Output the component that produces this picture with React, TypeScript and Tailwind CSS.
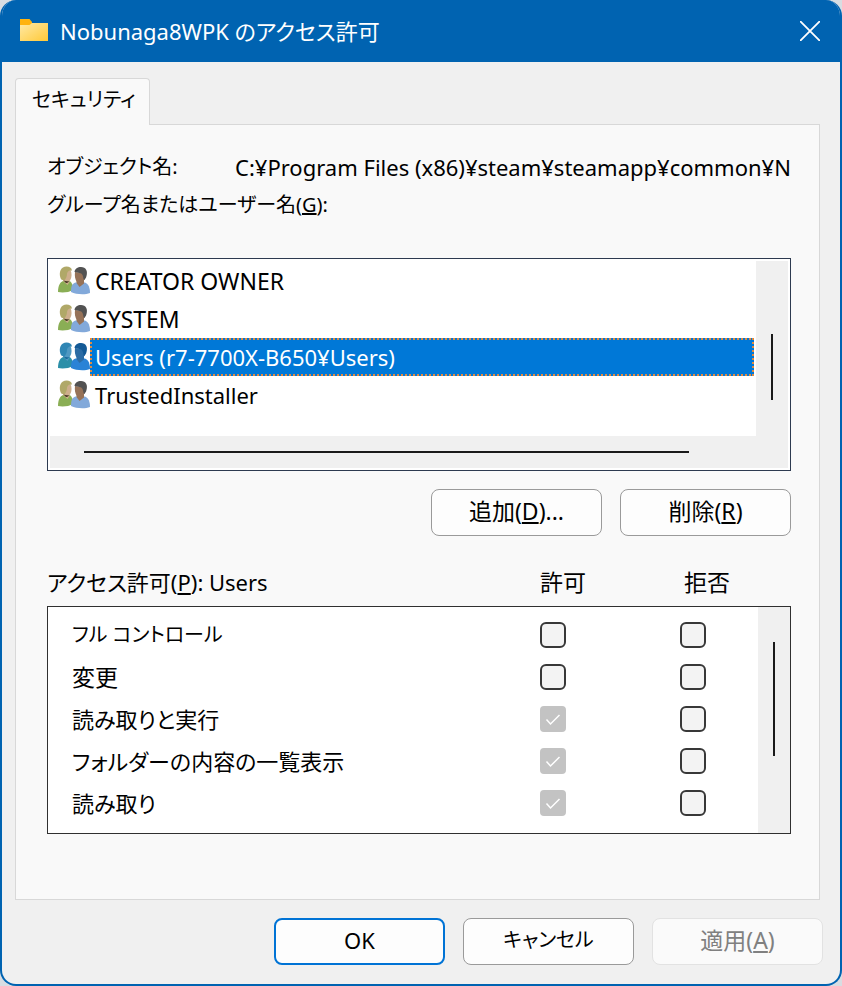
import React, { useState } from 'react';

const groups = [
    { id: 'creator', name: 'CREATOR OWNER', size: 'text-[23px]' },
    { id: 'system', name: 'SYSTEM', size: 'text-[23px]' },
    { id: 'users', name: 'Users (r7-7700X-B650¥Users)', size: 'text-[22px]' },
    { id: 'installer', name: 'TrustedInstaller', size: 'text-[22px]' },
];

const permissions = [
    { label: 'フル コントロール', inherited: false, size: 'text-xl' },
    { label: '変更', inherited: false, size: 'text-[23px]' },
    { label: '読み取りと実行', inherited: true, size: 'text-[22px]' },
    { label: 'フォルダーの内容の一覧表示', inherited: true, size: 'text-[22px]' },
    { label: '読み取り', inherited: true, size: 'text-[22px]' },
];

const FolderIcon = () => (
    <svg className="w-7 h-6 flex-shrink-0" viewBox="0 0 28 24" aria-hidden="true">
        <defs>
            <linearGradient id="folder" x1="0" y1="0" x2="1" y2="1">
                <stop offset="0" stopColor="#ffe9a6" />
                <stop offset="1" stopColor="#ffc937" />
            </linearGradient>
        </defs>
        <path d="M0 0h9.500l2.500 3v4H0z" fill="#ffb30f" />
        <path d="M0 6h9.500l2.500-2h16v18H0z" fill="url(#folder)" />
    </svg>
);

const GroupIcon = ({ selected }: { selected: boolean }) => {
    const c = selected
        ? { hairA: '#2f86b4', faceA: '#4f98c2', bodyA: '#2b8fa8', shade: '#1a6a9c', hairB: '#145a96', faceB: '#2c6ca4', bodyB: '#2a83d6' }
        : { hairA: '#b0a868', faceA: '#cdae8c', bodyA: '#8aae55', shade: '#4a3c28', hairB: '#525252', faceB: '#967258', bodyB: '#82a9da' };

    return (
        <svg className="w-8 h-8 flex-shrink-0" viewBox="0 0 32 32" aria-hidden="true">
            {/* woman */}
            <path d="M0 27c0-5.500 1.500-9.500 5-11h6.500c2.500 1.500 3.500 4 3.500 9-4 2.500-11 3-15 2z" fill={c.bodyA} />
            <path d="M5 13h6.500v4l-2 3L5 16z" fill={c.faceA} />
            <path d="M6 6l6.500-1c1.500 3 1.500 7.500-.5 10.500-2 1.500-4.500 1-6-1z" fill={c.faceA} />
            <path d="M2.500 13C.5 7 3 1.500 8.500 1.500c3 0 5 1 5.500 4-2.500 0-4.500.5-5 3 0 3-1 5.500-3 7-2-.5-3-1-3.500-2.500z" fill={c.hairA} />
            <path d="M5.500 15.500c2 .5 3.500 1 5.500.5-.5 1.500-1.500 2-3 2z" fill={c.shade} />
            {/* man */}
            <path d="M13 27c0-5.500 1-8.500 4.500-9.500H27c3.500 1.500 5 5 5 10.500-5 2-14 1.500-19-1z" fill={c.bodyB} />
            <path d="M18.500 14l7.500 0v4.500L21.500 22l-3-4z" fill={c.faceB} />
            <path d="M17 7l8 1 1.500 6.500c-2 3-5 4.500-7.500 2.500-2-2.500-2.500-6-2-10z" fill={c.faceB} />
            <path d="M16.500 7C17 3.500 19.500 2 23 2c5 0 7 4 5.500 9-.5 2-1.500 3.500-2.500 4-1-1.500-.5-3-1.500-5-1-2.500-4.500-2-8-3z" fill={c.hairB} />
        </svg>
    );
};

interface CheckProps {
    label: string;
    inherited?: boolean;
}

const Check: React.FC<CheckProps> = ({ label, inherited = false }) => (
    <label className="grid w-[26px] h-[26px]">
        <input
            type="checkbox"
            aria-label={label}
            defaultChecked={inherited}
            disabled={inherited}
            className="col-start-1 row-start-1 appearance-none w-full h-full rounded-md border-2 border-[#383838] bg-[#f3f3f3] disabled:rounded-sm disabled:border-[#c3c3c3] disabled:bg-[#c3c3c3]"
        />
        {inherited && (
            <svg className="col-start-1 row-start-1 w-full h-full" viewBox="0 0 26 26" fill="none" stroke="#fff" strokeWidth="1.500" aria-hidden="true">
                <path d="M6.500 13.500l4 4.500 9-9" />
            </svg>
        )}
    </label>
);

interface DialogButtonProps {
    children: React.ReactNode;
    variant?: 'primary' | 'normal';
    size?: string;
    disabled?: boolean;
}

const DialogButton: React.FC<DialogButtonProps> = ({ children, variant = 'normal', size = 'text-[23px]', disabled }) => (
    <button
        type="button"
        disabled={disabled}
        className={`w-[171px] h-[47px] pb-1 rounded-lg bg-[#fdfdfd] disabled:bg-[#fafafa] disabled:text-[#808080] disabled:border-[#e2e2e2] ${size}
            ${variant === 'primary' ? 'border-2 border-[#0073d5]' : 'border border-[#9a9a9a]'}`}
    >
        {children}
    </button>
);

export default function App() {
    const [selected, setSelected] = useState('users');

    return (
        <div className="min-h-screen flex bg-[#d8dde2] font-['Noto_Sans','Noto_Sans_CJK_JP',sans-serif] text-[22px] leading-[38px] text-black [font-feature-settings:'palt']">
            <main className="flex-1 min-w-0 flex flex-col rounded-2xl overflow-hidden bg-[#f0f0f0] border-2 border-t-0 border-[#0063b1]">
                {/* Title bar */}
                <header className="h-[62px] flex items-center gap-3 pl-[18px] pr-5 bg-[#0063b1] text-white">
                    <FolderIcon />
                    <h1 className="flex-1 truncate">Nobunaga8WPK のアクセス許可</h1>
                    <button type="button" aria-label="閉じる">
                        <svg className="w-5 h-5" viewBox="0 0 20 20" stroke="#fff" strokeWidth="1.800" aria-hidden="true">
                            <path d="M0 0l20 20M20 0L0 20" />
                        </svg>
                    </button>
                </header>

                <div className="flex-1 flex flex-col pt-4 pb-[18px] pl-[13px] pr-[17px]">
                    {/* Tab strip */}
                    <div role="tablist" className="flex h-[46px]">
                        <button
                            type="button"
                            role="tab"
                            aria-selected="true"
                            className="z-10 w-[135px] -mb-px pb-1 px-4 text-left text-xl leading-[38px] whitespace-nowrap border border-b-0 border-[#d8d8d8] bg-[#f9f9f9] rounded-t-sm"
                        >
                            セキュリティ
                        </button>
                    </div>

                    {/* Security page */}
                    <section className="mr-[3px] pl-[31px] pr-7 pt-[23px] pb-[65px] border border-[#d8d8d8] bg-[#f9f9f9]">
                        <div className="flex">
                            <span className="w-[188px] flex-shrink-0 text-xl leading-[38px]">オブジェクト名:</span>
                            <span className="flex-1 overflow-hidden whitespace-nowrap">C:¥Program Files (x86)¥steam¥steamapp¥common¥Nobunaga8WPK</span>
                        </div>
                        <h2 className="text-xl leading-[38px]">グループ名またはユーザー名(<u>G</u>):</h2>

                        <div className="mt-[34px] h-[213px] p-0.5 flex flex-col border border-[#2d3a50] bg-white">
                            <div className="flex-1 min-h-0 flex">
                                <ul className="flex-1 min-w-0 pt-px pl-2 pr-0.5">
                                    {groups.map((group) => {
                                        const isSelected = group.id === selected;

                                        return (
                                            <li key={group.id}>
                                                <button
                                                    type="button"
                                                    aria-pressed={isSelected}
                                                    onClick={() => setSelected(group.id)}
                                                    className="w-full h-[38px] flex items-center text-left"
                                                >
                                                    <GroupIcon selected={isSelected} />
                                                    <span
                                                        className={`flex-1 h-[38px] leading-[34px] px-[3px] border-2 border-dotted truncate ${group.size}
                                                            ${isSelected ? 'bg-[#0078d7] border-[#e08a40] text-white' : 'border-transparent'}`}
                                                    >
                                                        {group.name}
                                                    </span>
                                                </button>
                                            </li>
                                        );
                                    })}
                                </ul>
                                <div className="w-8 flex justify-center bg-[#f0f0f0] pt-[73px]">
                                    <div className="w-0.5 h-[66px] bg-[#1a1a1a]" />
                                </div>
                            </div>
                            <div className="h-8 flex items-center bg-[#f0f0f0] pl-[34px] pr-[99px]">
                                <div className="flex-1 h-0.5 bg-[#1a1a1a]" />
                            </div>
                        </div>

                        <div className="mt-[18px] flex justify-end gap-[18px]">
                            <DialogButton>追加(<u>D</u>)...</DialogButton>
                            <DialogButton>削除(<u>R</u>)</DialogButton>
                        </div>

                        <div className="mt-[27px] pb-[5px] flex">
                            <h2 className="flex-1">アクセス許可(<u>P</u>): Users</h2>
                            <span className="w-36 text-[23px] leading-[38px]">許可</span>
                            <span className="w-[107px] text-[23px] leading-[38px]">拒否</span>
                        </div>
                        <div className="flex border border-[#303030] bg-white">
                            <table className="flex-1 mt-[7px] mb-[9px]">
                                <tbody className="block">
                                    {permissions.map((permission) => (
                                        <tr key={permission.label} className="flex items-center h-[42px]">
                                            <th scope="row" className={`flex-1 pl-6 text-left font-normal ${permission.size}`}>
                                                {permission.label}
                                            </th>
                                            <td className="w-[140px]">
                                                <Check label={`${permission.label} 許可`} inherited={permission.inherited} />
                                            </td>
                                            <td className="w-[78px]">
                                                <Check label={`${permission.label} 拒否`} />
                                            </td>
                                        </tr>
                                    ))}
                                </tbody>
                            </table>
                            <div className="w-8 flex justify-center bg-[#f0f0f0] pt-[35px]">
                                <div className="w-0.5 h-[114px] bg-[#1a1a1a]" />
                            </div>
                        </div>
                    </section>

                    <footer className="mt-[18px] flex justify-end gap-[18px]">
                        <DialogButton variant="primary" size="text-[22px]">OK</DialogButton>
                        <DialogButton size="text-xl">キャンセル</DialogButton>
                        <DialogButton disabled>適用(<u>A</u>)</DialogButton>
                    </footer>
                </div>
            </main>
        </div>
    );
}
